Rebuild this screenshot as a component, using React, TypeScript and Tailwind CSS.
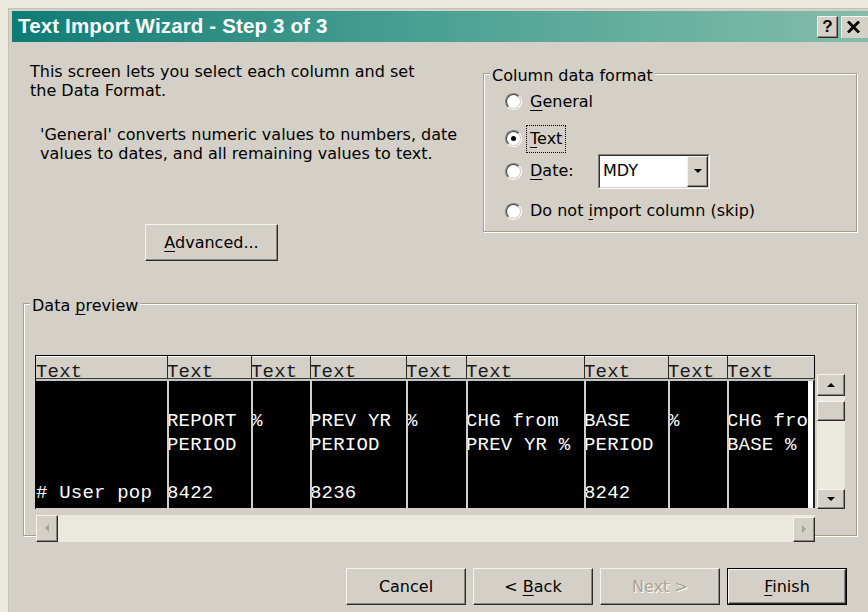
import React from "react";

const UI = "font-['DejaVu_Sans',Verdana,sans-serif] text-[16px] text-black";
const MONO = "font-['Liberation_Mono','Courier_New',monospace] text-[19px] tracking-[0.2px]";

const raised =
  "border border-t-[#f6f4ef] border-l-[#f6f4ef] border-r-[#2a2a2a] border-b-[#2a2a2a] shadow-[inset_-1px_-1px_0_#8a867c] bg-[#d4d0c8]";

function Mn({ children }: { children: React.ReactNode }) {
  return <span className="underline decoration-1 underline-offset-[3px]">{children}</span>;
}

function Radio({ checked }: { checked?: boolean }) {
  return (
    <span className="flex h-[17px] w-[17px] shrink-0 rounded-full border border-t-[#808080] border-l-[#808080] border-r-white border-b-white">
      <span className="flex flex-1 items-center justify-center rounded-full border border-t-[#404040] border-l-[#404040] border-r-[#d4d0c8] border-b-[#d4d0c8] bg-white">
        {checked && <span className="h-[5px] w-[5px] rounded-full bg-black" />}
      </span>
    </span>
  );
}

function Arrow({ dir, muted }: { dir: "up" | "down" | "left" | "right"; muted?: boolean }) {
  const fill = muted ? "#a8a294" : "#000";
  const pts = {
    up: "0,4 4,0 8,4",
    down: "0,0 8,0 4,4",
    left: "4,0 4,8 0,4",
    right: "0,0 0,8 4,4",
  }[dir];
  const vert = dir === "up" || dir === "down";
  return (
    <svg width={vert ? 8 : 4} height={vert ? 4 : 8} viewBox={vert ? "0 0 8 4" : "0 0 4 8"}>
      <polygon points={pts} fill={fill} />
    </svg>
  );
}

type Col = { w: string; sep: boolean; rows: string[] };

const columns: Col[] = [
  { w: "w-[131px]", sep: false, rows: ["", "", "", "", "# User pop"] },
  { w: "w-[84px]", sep: true, rows: ["", "REPORT", "PERIOD", "", "8422"] },
  { w: "w-[59px]", sep: true, rows: ["", "%", "", "", ""] },
  { w: "w-[96px]", sep: true, rows: ["", "PREV YR", "PERIOD", "", "8236"] },
  { w: "w-[60px]", sep: true, rows: ["", "%", "", "", ""] },
  { w: "w-[118px]", sep: true, rows: ["", "CHG from", "PREV YR %", "", ""] },
  { w: "w-[84px]", sep: true, rows: ["", "BASE", "PERIOD", "", "8242"] },
  { w: "w-[59px]", sep: true, rows: ["", "%", "", "", ""] },
  { w: "min-w-0 flex-1", sep: true, rows: ["", "CHG from", "BASE %", "", ""] },
];

function PreviewColumn({ col, last }: { col: Col; last: boolean }) {
  return (
    <div className={`${col.w} flex flex-col ${last ? "" : "shrink-0"}`}>
      <div
        className={`h-[23px] border-b border-b-[#3a3a3a] bg-[#d4d0c8] shadow-[inset_0_1px_0_#fff] ${
          col.sep ? "border-l border-l-[#2a2a2a]" : ""
        } ${last ? "border-r border-r-black" : ""}`}
      >
        <div className={`${MONO} pt-[5.5px] leading-[23px] text-[#1a1a1a] ${col.sep ? "-ml-[1px]" : ""}`}>Text</div>
      </div>
      <div className={`flex h-[129px] min-w-0 border-t-2 border-t-[#c4c4c4] ${last ? "border-r-2 border-r-[#202020]" : ""}`}>
        <div
          className={`min-w-0 flex-1 overflow-hidden bg-black pt-[4px] ${col.sep ? "border-l-2 border-l-[#cfcfcf]" : ""}`}
        >
          {col.rows.map((r, i) => (
            <div
              key={i}
              className={`${MONO} h-[24px] whitespace-pre leading-[24px] text-white ${col.sep ? "-ml-[2px]" : ""}`}
            >
              {r}
            </div>
          ))}
        </div>
        {last && <div className="w-[5px] shrink-0 bg-white" />}
      </div>
    </div>
  );
}

export default function App() {
  return (
    <div className={`${UI} flex h-[612px] w-[868px] flex-col overflow-hidden bg-[#ebe8e0] pl-[8px] pt-[8px]`}>
      <div className="flex flex-1 flex-col border-l border-t border-[#c6c1b5] bg-[#d4d0c8] pl-[3px] pt-[2px]">
        {/* title bar */}
        <div className="flex h-[31px] shrink-0 items-center bg-gradient-to-r from-[#0b7c76] via-[#4aa294] to-[#83bda9] pl-[6px]">
          <span className="flex-1 font-['Liberation_Sans',Arial,sans-serif] text-[20.5px] font-bold tracking-[0.15px] text-white">
            Text Import Wizard - Step 3 of 3
          </span>
          <div className={`${raised} mr-[3px] flex h-[22px] w-[21px] items-center justify-center`}>
            <span className="font-['Liberation_Sans',Arial,sans-serif] text-[17px] font-bold leading-none">?</span>
          </div>
          <div className="flex h-[22px] w-[27px] items-center justify-center border-l border-t border-[#f6f4ef] bg-[#d4d0c8] pr-[3px]">
            <svg width="13" height="12" viewBox="0 0 13 12">
              <path d="M1 0.5 L12 11.5 M12 0.5 L1 11.5" stroke="#000" strokeWidth="2.8" />
            </svg>
          </div>
        </div>

        {/* upper section */}
        <div className="flex h-[250px] shrink-0">
          <div className="w-[471px] shrink-0">
            <p className="ml-[18px] mt-[20px] leading-[19px]">
              This screen lets you select each column and set
              <br />
              the Data Format.
            </p>
            <p className="ml-[28px] mt-[24.5px] leading-[19px]">
              'General' converts numeric values to numbers, date
              <br />
              values to dates, and all remaining values to text.
            </p>
            <div className={`${raised} ml-[133px] mt-[61.5px] flex h-[37px] w-[133px] items-center justify-center`}>
              <span>
                <Mn>A</Mn>dvanced...
              </span>
            </div>
          </div>

          <fieldset className="mt-[19.5px] h-[170px] w-[374px] shrink-0 border border-[#a89f88] shadow-[inset_1px_1px_0_#fff,1px_1px_0_#fff]">
            <legend className="ml-[6px] bg-[#d4d0c8] px-[2px] pt-[4px] leading-[19px]">Column data format</legend>
            <div className="flex flex-col pl-[21px]">
              <div className="mt-[5px] flex h-[24px] items-center gap-[8px]">
                <Radio />
                <span>
                  <Mn>G</Mn>eneral
                </span>
              </div>
              <div className="mt-[13px] flex h-[24px] items-center gap-[5px]">
                <Radio checked />
                <span className="px-[3px] py-[1px] outline-1 outline-dotted outline-black">
                  <Mn>T</Mn>ext
                </span>
              </div>
              <div className="mt-[3px] flex h-[35px] items-center">
                <Radio />
                <span className="ml-[8px] w-[68px]">
                  <Mn>D</Mn>ate:
                </span>
                <div className="flex h-[35px] w-[112px] border border-t-[#808080] border-l-[#808080] border-r-white border-b-white">
                  <div className="flex flex-1 items-stretch border border-t-[#303030] border-l-[#303030] border-r-[#d4d0c8] border-b-[#d4d0c8] bg-white">
                    <span className="flex flex-1 items-center pl-[3px]">MDY</span>
                    <div className={`${raised} flex w-[21px] items-center justify-center`}>
                      <Arrow dir="down" />
                    </div>
                  </div>
                </div>
              </div>
              <div className="mt-[10.5px] flex h-[24px] items-center gap-[8px]">
                <Radio />
                <span>
                  Do not <Mn>i</Mn>mport column (skip)
                </span>
              </div>
            </div>
          </fieldset>
        </div>

        {/* data preview */}
        <fieldset className="ml-[11px] h-[244px] w-[834px] shrink-0 border border-[#a89f88] shadow-[inset_1px_1px_0_#fff,1px_1px_0_#fff]">
          <legend className="ml-[6px] bg-[#d4d0c8] px-[2px] pt-[4px] leading-[19px]">
            Data <Mn>p</Mn>review
          </legend>
          <div className="ml-[11px] mt-[39.5px] flex flex-col">
            <div className="flex">
              <div className="flex w-[780px] shrink-0 border-l border-t border-black">
                {columns.map((c, i) => (
                  <PreviewColumn key={i} col={c} last={i === columns.length - 1} />
                ))}
              </div>
              <div className="ml-[2px] mt-[19px] flex h-[135px] w-[28px] flex-col bg-[#ebe8e0]">
                <div className={`${raised} flex h-[22px] items-center justify-center`}>
                  <Arrow dir="up" />
                </div>
                <div className={`${raised} mt-[5px] h-[20px]`} />
                <div className="flex-1" />
                <div className={`${raised} flex h-[20px] items-center justify-center`}>
                  <Arrow dir="down" />
                </div>
              </div>
            </div>
            <div className="ml-[1px] mt-[6px] flex h-[27px] w-[779px] bg-[#ebe8e0]">
              <div className={`${raised} flex w-[22px] items-center justify-center`}>
                <Arrow dir="left" muted />
              </div>
              <div className="flex-1" />
              <div className={`${raised} mt-[2px] flex w-[22px] items-center justify-center`}>
                <Arrow dir="right" muted />
              </div>
            </div>
          </div>
        </fieldset>

        {/* wizard buttons */}
        <div className="mt-[32px] flex justify-end gap-[7px] pr-[21px]">
          <div className={`${raised} flex h-[37px] w-[120px] items-center justify-center`}>Cancel</div>
          <div className={`${raised} flex h-[37px] w-[120px] items-center justify-center`}>
            <span>
              &lt; <Mn>B</Mn>ack
            </span>
          </div>
          <div className={`${raised} flex h-[37px] w-[120px] items-center justify-center`}>
            <span className="text-[#aaa394] [text-shadow:1px_1px_0_#fff]">Next &gt;</span>
          </div>
          <div className="border border-black">
            <div className={`${raised} flex h-[35px] w-[118px] items-center justify-center`}>
              <span>
                <Mn>F</Mn>inish
              </span>
            </div>
          </div>
        </div>
      </div>
    </div>
  );
}
